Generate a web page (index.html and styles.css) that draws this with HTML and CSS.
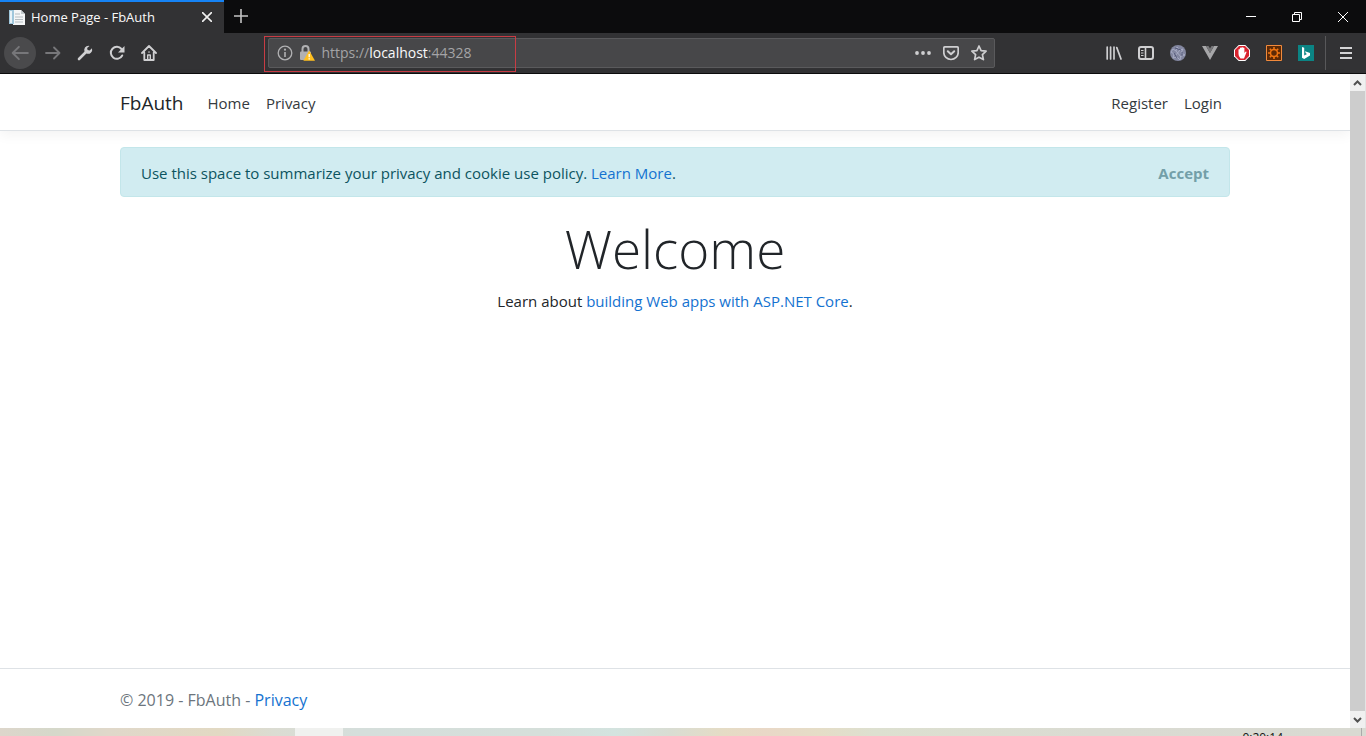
FILE: index.html
```html
<!DOCTYPE html>
<html lang="en">
<head>
<meta charset="utf-8">
<meta name="viewport" content="width=device-width, initial-scale=1">
<title>Home Page - FbAuth</title>
<link rel="stylesheet" href="styles.css">
</head>
<body>
<div class="window">
  <div class="tabbar">
    <div class="tab">
      <svg class="tab-icon" viewBox="0 0 16 16" width="16" height="16"><path fill="#f4f6f7" d="M4 1h8l4 4v11H4z"/><path fill="#9fc7dc" d="M0 1h5v14H0z"/><path fill="#e8f2f7" d="M1 2h2v12H1z"/><path d="M6 5h5M6 8h8M6 10.500h8M6 13h8" stroke="#b4bcc0"/><path fill="#c3cacd" d="M12 1v4h4z"/></svg>
      <span class="tab-title">Home Page - FbAuth</span>
      <button class="tab-close" aria-label="Close tab"><svg viewBox="0 0 10 10" width="10" height="10"><path d="M0 0l10 10M10 0L0 10" stroke="#f0f0f0" stroke-width="1.600"/></svg></button>
    </div>
    <button class="new-tab" aria-label="New tab"><svg viewBox="0 0 14 14" width="14" height="14"><path d="M7 0v14M0 7h14" stroke="#c4c4c4" stroke-width="1.600"/></svg></button>
    <div class="window-controls">
      <button aria-label="Minimize"><svg viewBox="0 0 10 10" width="10" height="10"><path d="M0 4.500h10" stroke="#fff"/></svg></button>
      <button aria-label="Restore"><svg viewBox="0 0 10 10" width="10" height="10" fill="none" stroke="#fff"><path d="M.5 2.500h7v7h-7zM2.500 2.500v-2h7v7h-2"/></svg></button>
      <button aria-label="Close"><svg viewBox="0 0 10 10" width="10" height="10"><path d="M0 0l10 10M10 0L0 10" stroke="#fff"/></svg></button>
    </div>
  </div>

  <div class="toolbar">
    <div class="nav-buttons">
      <button class="back" aria-label="Back"><svg viewBox="0 0 16 16" width="18" height="18" fill="none" stroke="#77777a" stroke-width="1.700" stroke-linecap="round" stroke-linejoin="round"><path d="M15 8H1.500M7 2.500L1.500 8 7 13.500"/></svg></button>
      <button class="tool" aria-label="Forward"><svg viewBox="0 0 16 16" width="16" height="16" fill="none" stroke="#77777a" stroke-width="1.800" stroke-linecap="round" stroke-linejoin="round"><path d="M1 8h13.500M9 2.500L14.500 8 9 13.500"/></svg></button>
      <button class="tool" aria-label="Developer tools"><svg viewBox="0 0 16 16" width="16" height="16"><path d="M2 14l7-7" stroke="#cfcfd1" stroke-width="2.600" stroke-linecap="round"/><path fill="#cfcfd1" d="M11.500.8a4.200 4.200 0 0 0-4 5.700l2 2a4.200 4.200 0 0 0 5.500-5.200l-2.400 2.300-2-.6-.5-2L12.500.9z"/></svg></button>
      <button class="tool" aria-label="Reload"><svg viewBox="0 0 16 16" width="16" height="16"><path d="M13.200 10.500A6 6 0 1 1 12.500 4" fill="none" stroke="#cfcfd1" stroke-width="2" stroke-linecap="round"/><path fill="#cfcfd1" d="M15.500 1v6.500H9z"/></svg></button>
      <button class="tool" aria-label="Home"><svg viewBox="0 0 16 16" width="16" height="16" fill="none" stroke="#cfcfd1" stroke-width="1.800" stroke-linecap="round" stroke-linejoin="round"><path d="M1 8l7-7 7 7M3.300 7.500V15h9.400V7.500"/><path d="M6.700 14.500V10h2.600v4.500" stroke-width="1.400"/><path d="M7.500 7h1" stroke-width="1.200"/></svg></button>
    </div>
    <div class="spacer"></div>
    <div class="urlbar">
      <button class="url-button" aria-label="Site information"><svg viewBox="0 0 16 16" width="16" height="16"><circle cx="8" cy="8" r="6.800" fill="none" stroke="#b1b1b3" stroke-width="1.300"/><path d="M8 7v5" stroke="#b1b1b3" stroke-width="1.600"/><circle cx="8" cy="4.700" r="1.100" fill="#b1b1b3"/></svg></button>
      <button class="url-button lock" aria-label="Connection is not secure"><svg viewBox="0 0 16 16" width="16" height="16"><path d="M3.500 7V4a3 3 0 0 1 6 0v3" fill="none" stroke="#b1b1b3" stroke-width="2"/><rect x="1" y="6.500" width="11" height="8.500" rx="1" fill="#b1b1b3"/><path d="M10.200 5.500L16 15.800H4.400z" fill="#ffbf1f"/><path d="M10.200 9v3.300M10.200 13.200v1.200" stroke="#fff" stroke-width="1.300"/></svg></button>
      <div class="address">
        <input id="address" type="text" aria-label="Address">
        <label class="address-text" for="address">https://<span class="host">localhost</span>:44328</label>
      </div>
      <button class="url-button" aria-label="Page actions"><svg viewBox="0 0 16 16" width="16" height="16" fill="#cfcfd1"><circle cx="2" cy="8" r="1.900"/><circle cx="8" cy="8" r="1.900"/><circle cx="14" cy="8" r="1.900"/></svg></button>
      <button class="url-button" aria-label="Save to Pocket"><svg viewBox="0 0 16 16" width="16" height="16" fill="none" stroke="#cfcfd1" stroke-width="1.700" stroke-linecap="round" stroke-linejoin="round"><path d="M2 1.800h12a1.200 1.200 0 0 1 1.200 1.200v4.500a7.200 7 0 0 1-14.400 0V3A1.200 1.200 0 0 1 2 1.800z"/><path d="M4.800 6.300L8 9.300l3.200-3" stroke-width="2"/></svg></button>
      <button class="url-button" aria-label="Bookmark this page"><svg viewBox="0 0 16 16" width="16" height="16" fill="none" stroke="#cfcfd1" stroke-width="1.700" stroke-linejoin="round"><path d="M8 1l2.100 4.600 5 .6-3.700 3.400 1 5L8 12.200l-4.400 2.400 1-5L.9 6.200l5-.6z"/></svg></button>
      <span class="url-outline"></span>
    </div>
    <div class="spacer"></div>
    <div class="extensions">
      <button class="tool" aria-label="Library"><svg viewBox="0 0 16 16" width="16" height="16" stroke="#cfcfd1" stroke-width="1.700" stroke-linecap="round"><path d="M1.200 2v12M4.600 2v12M8 2v12M10.800 2.600L15 14"/></svg></button>
      <button class="tool" aria-label="Sidebars"><svg viewBox="0 0 16 16" width="16" height="16" fill="none" stroke="#cfcfd1"><rect x="1" y="2" width="14" height="12" rx="2" stroke-width="2"/><path d="M7.500 3v10" stroke-width="1.600"/><path d="M3 5.500h2.500M3 8h2.500M3 10.500h2.500"/></svg></button>
      <button class="tool" aria-label="Web extension"><svg viewBox="0 0 16 16" width="16" height="16"><circle cx="8" cy="8" r="8" fill="#8387a0"/><path d="M3 4l3 2 1-4 3 3 3-1-2 4 4 2-4 1-1 4-3-3-4 1 1-4-3-2zM6 6l5 6M10 5l-5 6" fill="none" stroke="#aeb2ca" stroke-width=".8"/><path d="M5 3l6 2M12 7v4M4 8l3 5" stroke="#555a7b"/></svg></button>
      <button class="tool" aria-label="Vue devtools"><svg viewBox="0 0 16 16" width="16" height="16"><path fill="#a6a6a8" d="M0 1h4l4 7 4-7h4L8 15z"/><path fill="#77777a" d="M4 1h2.500L8 3.500 9.500 1H12L8 8z"/></svg></button>
      <button class="tool" aria-label="Ad blocker"><svg viewBox="0 0 16 16" width="16" height="16"><path fill="#fff" d="M4.700 0h6.600L16 4.700v6.600L11.300 16H4.700L0 11.300V4.700z"/><path fill="#d9232e" d="M5 1h6l4 4v6l-4 4H5l-4-4V5z"/><path fill="#fff" d="M4.500 4.500q.8-.8 1.400 0V3q.8-.8 1.500 0v-.5q.8-.8 1.500 0V3q.8-.8 1.500 0v5l1-1.200q1-.5 1.200.3L10 13.500H6.500Q4.500 11.500 4.500 9z"/></svg></button>
      <button class="tool" aria-label="Settings extension"><svg viewBox="0 0 16 16" width="16" height="16"><path fill="#5d2a06" stroke="#f28a3c" d="M.5.5h15v15H.5z"/><circle cx="8" cy="8" r="3.500" fill="none" stroke="#ef7512" stroke-width="1.500"/><path d="M8 2v2.500M8 11.500V14M2 8h2.500M11.500 8H14M3.800 3.800l1.700 1.700M10.500 10.500l1.700 1.700M12.200 3.800l-1.700 1.700M5.500 10.500l-1.700 1.700" stroke="#ef7512" stroke-width="1.600"/></svg></button>
      <button class="tool" aria-label="Bing"><svg viewBox="0 0 16 16" width="16" height="16"><path fill="#0b8484" d="M0 0h16v16H0z"/><path fill="#fff" d="M4 2l2.200.8v7.700L9 9 7.800 8.300 7 6.200l5 1.800v2.500L6.200 14 4 12.700z"/></svg></button>
    </div>
    <button class="menu" aria-label="Open menu"><svg viewBox="0 0 12 12" width="12" height="12"><path d="M0 1h12M0 6h12M0 11h12" stroke="#d4d4d6" stroke-width="1.800"/></svg></button>
  </div>

  <div class="viewport">
    <div class="page">
      <header class="site-header">
        <nav class="container site-nav">
          <a class="brand" href="#">FbAuth</a>
          <a class="nav-link" href="#">Home</a>
          <a class="nav-link" href="#">Privacy</a>
          <a class="nav-link account" href="#">Register</a>
          <a class="nav-link" href="#">Login</a>
        </nav>
      </header>
      <div class="container content">
        <div class="alert" role="alert">
          <span>Use this space to summarize your privacy and cookie use policy. <a href="#">Learn More</a>.</span>
          <button class="accept">Accept</button>
        </div>
        <main>
          <h1>Welcome</h1>
          <p>Learn about <a href="#">building Web apps with ASP.NET Core</a>.</p>
        </main>
      </div>
      <footer class="site-footer">
        <div class="container">© 2019 - FbAuth - <a href="#">Privacy</a></div>
      </footer>
    </div>
    <div class="scrollbar">
      <button aria-label="Scroll up"><svg viewBox="0 0 9 6" width="9" height="6"><path d="M1 5l3.500-3.500L8 5" fill="none" stroke="#505050" stroke-width="2"/></svg></button>
      <div class="thumb"></div>
      <button aria-label="Scroll down"><svg viewBox="0 0 9 6" width="9" height="6"><path d="M1 1l3.500 3.500L8 1" fill="none" stroke="#505050" stroke-width="2"/></svg></button>
    </div>
  </div>

  <div class="taskbar">
    <span class="task-active"></span>
    <time class="clock">0:20:14</time>
    <span class="show-desktop"></span>
  </div>
</div>
</body>
</html>
```

FILE: styles.css
```css
* { box-sizing: border-box; }

body {
  margin: 0;
  font-family: "Open Sans", "Noto Sans", sans-serif;
  font-size: 15px;
  line-height: 24px;
  color: #212529;
}

button {
  display: flex;
  align-items: center;
  justify-content: center;
  flex: none;
  margin: 0;
  padding: 0;
  border: 0;
  background: none;
  font: inherit;
}

a { color: #1472d0; text-decoration: none; }

.window {
  display: flex;
  flex-direction: column;
  height: 100vh;
  overflow: hidden;
}

/* Tab strip */
.tabbar {
  display: flex;
  flex: none;
  height: 33px;
  background: #0c0c0d;
}

.tab {
  display: flex;
  align-items: center;
  gap: 6px;
  width: 224px;
  padding: 0 12px 2px 9px;
  border-top: 2px solid #1683f5;
  background: #323234;
}

.tab-icon { flex: none; }

.tab-title {
  flex: 1;
  font-size: 13px;
  color: #f9f9fa;
  white-space: nowrap;
}

.new-tab { width: 34px; padding-bottom: 1px; }

.window-controls { display: flex; margin-left: auto; }
.window-controls button { width: 46px; }

/* Navigation toolbar */
.toolbar {
  display: flex;
  flex: none;
  align-items: center;
  height: 41px;
  padding-left: 4px;
  border-bottom: 1px solid #0c0c0d;
  background: #323234;
}

.nav-buttons, .extensions { display: flex; flex: none; align-items: center; }
.extensions { padding-right: 3px; }
.tool { width: 32px; height: 32px; }

.back {
  width: 32px;
  height: 32px;
  margin-right: 1px;
  border-radius: 50%;
  background: #4a4a4c;
}

.spacer { flex: 104; }

.urlbar {
  position: relative;
  display: flex;
  flex: 725;
  align-items: center;
  height: 30px;
  padding: 0 1px 0 2px;
  border: 1px solid #5a5a5c;
  border-radius: 2px;
  background: #474749;
}

.url-button { width: 28px; height: 28px; }
.lock { width: 16px; }

.address { position: relative; flex: 1; margin-left: 4px; }

.address input {
  display: block;
  width: 100%;
  height: 28px;
  padding: 0;
  border: 0;
  outline: 0;
  background: none;
  color: #f9f9fa;
  font: inherit;
}

.address-text {
  position: absolute;
  top: 2px;
  left: 2px;
  font-size: 14px;
  color: #a4a4a6;
}

.host { color: #f9f9fa; }

.url-outline {
  position: absolute;
  top: -3px;
  left: -5px;
  width: 252px;
  height: 36px;
  border: 1px solid #c83c44;
  pointer-events: none;
}

.menu {
  width: 41px;
  height: 34px;
  border-left: 1px solid #58585a;
}

/* Web page */
.viewport { display: flex; flex: 1; min-height: 0; background: #fff; }

.page {
  display: flex;
  flex: 1;
  flex-direction: column;
  min-width: 0;
}

.container {
  width: 100%;
  max-width: 1140px;
  margin: 0 auto;
  padding: 0 15px;
}

.site-header {
  padding: 9px 0 7px;
  border-bottom: 1px solid #dee2e6;
  box-shadow: 0 4px 12px rgba(0, 0, 0, 0.05);
}

.site-nav { display: flex; align-items: center; height: 40px; }

.brand {
  margin-right: 16px;
  font-size: 19px;
  color: #212529;
}

.nav-link { padding: 8px; color: #343a40; }
.account { margin-left: auto; }

.content { flex: 1; padding-top: 16px; }

.alert {
  display: flex;
  align-items: center;
  justify-content: space-between;
  min-height: 50px;
  padding: 13px 20px 11px;
  border: 1px solid #c3e6ea;
  border-radius: 4px;
  background: #d1ecf1;
  color: #0c5460;
}

.accept { font-weight: 700; color: #739fa8; }

main { padding-top: 20px; text-align: center; }

h1 {
  margin: 0 0 8px;
  font-size: 53px;
  font-weight: 300;
  line-height: 64px;
}

p { margin: 0; }

.site-footer {
  padding: 19px 0 16px;
  border-top: 1px solid #dee2e6;
  color: #6c757d;
  font-size: 16px;
}

.scrollbar {
  display: flex;
  flex: none;
  flex-direction: column;
  width: 16px;
  border-right: 1px solid #e4e4e4;
  background: #f0f0f0;
}

.scrollbar button { height: 17px; }
.thumb { flex: 1; background: #cdcdcd; }

/* Visible strip of the desktop taskbar */
.taskbar {
  display: flex;
  flex: none;
  height: 8px;
  overflow: hidden;
  background: linear-gradient(90deg, #ddd6cb 0, #d5d8ca 4%, #e0d8ca 8%, #e2d9c3 16%, #dbdcd2 20%, #d5dedb 26%, #d5dfda 40%, #d3e3df 45%, #d9ddd3 49%, #e5dcc5 53%, #e9d8c7 56%, #e5ddc7 60%, #dde0d0 64%, #dadbd2 80%, #d9dad2 100%);
}

.task-active { width: 48px; margin-left: 295px; background: #f0f1ef; }

.clock {
  margin: 2px 78px 0 auto;
  font-size: 12px;
  line-height: 16px;
  color: #111;
}

.show-desktop { width: 5px; border-left: 1px solid #aaa; }
```
